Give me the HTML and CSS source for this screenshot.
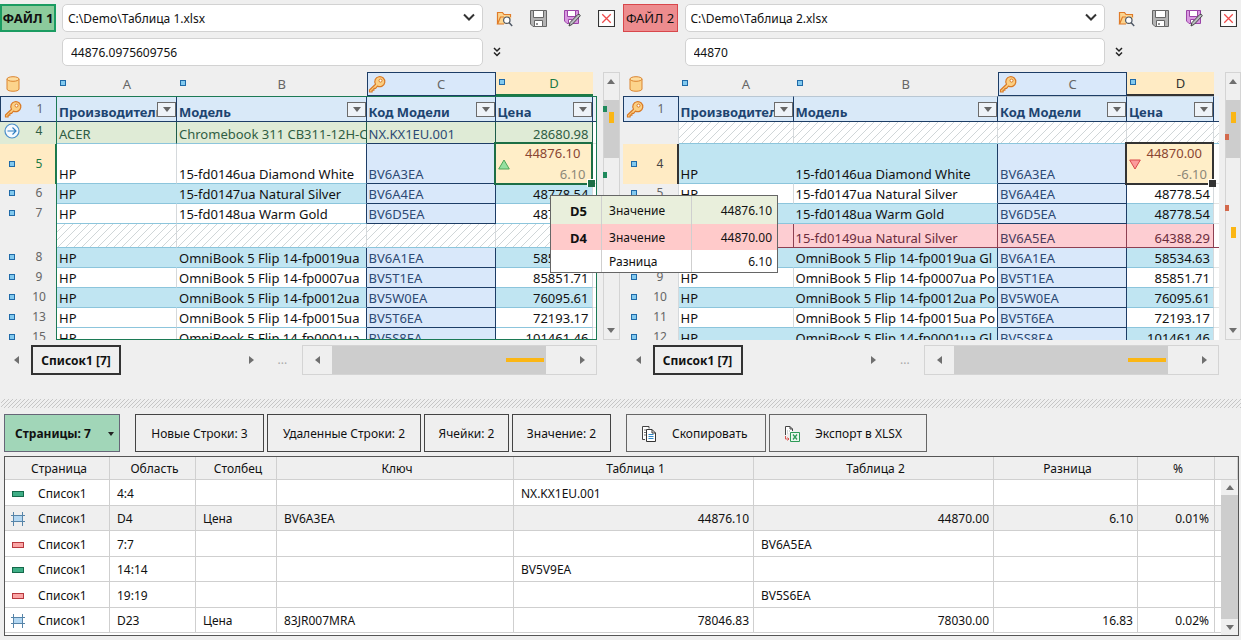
FILE: index.html
```html
<!DOCTYPE html>
<html lang="ru">
<head>
<meta charset="utf-8">
<title>Сравнение таблиц</title>
<link rel="stylesheet" href="styles.css">
</head>
<body>
<svg class="defs" aria-hidden="true">
  <symbol id="i-key" viewBox="0 0 18 18"><path d="M7.5 9.2 1.5 15v2h2.6v-1.8h1.8v-1.8h1.7l1.9-2.3a5 5 0 1 0-2-1.9z" fill="#fbcf83" stroke="#d97a26" stroke-width="1.2" stroke-linejoin="round"/><circle cx="12.5" cy="5.6" r="1.5" fill="#fff" stroke="#d97a26"/></symbol>
  <symbol id="i-db" viewBox="0 0 14 16"><path d="M1 3v10c0 3 12 3 12 0V3" fill="#fcd48c" stroke="#db842f"/><ellipse cx="7" cy="3" rx="6" ry="2.3" fill="#fddda0" stroke="#db842f"/></symbol>
  <symbol id="i-open" viewBox="0 0 17 17"><path d="M1.500 14V2.500h5l1.500 2h6.500V8" fill="#fbd490" stroke="#e07b28" stroke-width="1.2"/><path d="M1.500 14 4.500 7H15l-2 7z" fill="#fbd490"/><path d="M8 14H1.500l3-7H8" fill="none" stroke="#e07b28" stroke-width="1.2"/><circle cx="10.8" cy="10.2" r="3.2" fill="#fff" stroke="#4b5563" stroke-width="1.2"/><path d="m13 12.6 3.2 3.4" stroke="#4b5563" stroke-width="1.4"/></symbol>
  <symbol id="i-save" viewBox="0 0 17 17"><path d="M.5.5h16v16H3l-2.500-2.500z" fill="#b4b4b4" stroke="#666"/><path d="M3.500.5h10v7h-10z" fill="#fff" stroke="#666"/><path d="M4.500 10.500h8v6h-8z" fill="#fff" stroke="#666"/><path d="M7 13v2" stroke="#666" stroke-width="1.4"/></symbol>
  <symbol id="i-saveas" viewBox="0 0 17 17"><path d="M.5.500h14v13H3l-2.500-2.500z" fill="#d99ae0" stroke="#9b44a8"/><path d="M3.500.500h8v6h-8z" fill="#fff" stroke="#9b44a8"/><path d="M4.500 9.500H8v4H4.500z" fill="#fff" stroke="#9b44a8"/><path d="m5 16 1-3.500 8-8.200q1.800-.5 2.300 1.500l-8 8.500z" fill="#b9bcc0" stroke="#444"/></symbol>
  <symbol id="i-close" viewBox="0 0 16 16"><path d="M.5.5h15v15H.5z" fill="#fff" stroke="#333"/><path d="m4 4 8 8M12 4l-8 8" stroke="#f04b4b" stroke-width="1.200"/></symbol>
  <symbol id="i-more" viewBox="0 0 8 10"><path d="m1 1 3 3 3-3M1 5.500l3 3 3-3" fill="none" stroke="#222" stroke-width="1.500"/></symbol>
  <symbol id="i-chev" viewBox="0 0 12 8"><path d="m1 1.500 5 5 5-5" fill="none" stroke="#333" stroke-width="2"/></symbol>
  <symbol id="i-go" viewBox="0 0 16 16"><circle cx="8" cy="8" r="7" fill="#f5faff" stroke="#4b8fc9" stroke-width="1.200"/><path d="M3.500 8h8.500M8.500 4.500 12 8l-3.500 3.500" fill="none" stroke="#2f7fc2" stroke-width="1.200"/></symbol>
  <symbol id="i-grid" viewBox="0 0 14 14"><path d="M2.500 3.500h9v6h-9z" fill="#b3d7f2"/><path d="M2.500 0v14M11.500 0v14M0 3.500h14M0 9.500h14" stroke="#5684a8"/></symbol>
  <symbol id="i-copy" viewBox="0 0 16 16"><path d="M4 13.500H1.500v-13H8v2" fill="#fff" stroke="#444"/><path d="M3 4h2M3 6.500h2M3 9h2" stroke="#777"/><path d="M5.500 3.500H11L14.500 7v8.500h-9z" fill="#fff" stroke="#333"/><path d="M11 3.500V7h3.500" fill="none" stroke="#333"/><path d="M7.500 8.500h5M7.500 10.500h5M7.500 12.500h5" stroke="#2f86c7"/></symbol>
  <symbol id="i-xls" viewBox="0 0 16 16"><path d="M1.500 9V.5H6L8.500 3v2M6 .5V3h2.500" fill="#fff" stroke="#444"/><path d="M3 5h4M3 7h2" stroke="#9aa" stroke-dasharray="1 1"/><path d="M6.500 6.500h9v9h-9z" fill="#eaf6ee" stroke="#2e9a57"/><path d="m9 8.500 4 5M13 8.500l-4 5" stroke="#2e9a57" stroke-width="1.300"/><path d="M1.500 10v3H5M3.500 11.500 5 13l-1.500 1.500" fill="none" stroke="#d9534f"/></symbol>
  <symbol id="i-up" viewBox="0 0 12 11"><path d="M6 1 11.300 10H.7z" fill="#96e0a0" stroke="#4fa558"/></symbol>
  <symbol id="i-down" viewBox="0 0 12 11"><path d="M6 10 11.300 1H.7z" fill="#fb9b9b" stroke="#d94848"/></symbol>
</svg>

<main class="app">
<div class="panes">
  <section class="pane">
    <div class="filebar">
      <label class="tag tag-a" for="path1">ФАЙЛ 1</label>
      <div class="path"><select id="path1"><option>C:\Demo\Таблица 1.xlsx</option></select><svg><use href="#i-chev"/></svg></div>
      <div class="actions">
        <button aria-label="Открыть"><svg><use href="#i-open"/></svg></button>
        <button aria-label="Сохранить"><svg><use href="#i-save"/></svg></button>
        <button aria-label="Сохранить как"><svg><use href="#i-saveas"/></svg></button>
        <button aria-label="Закрыть"><svg><use href="#i-close"/></svg></button>
      </div>
      <input class="value" aria-label="Значение ячейки файла 1" value="44876.0975609756">
      <button class="expand" aria-label="Развернуть"><svg><use href="#i-more"/></svg></button>
    </div>
    <div class="sheet">
      <div class="viewport">
        <table class="grid grid-a">
          <colgroup><col class="c-n"><col class="c-a"><col><col class="c-c"><col class="c-d"><col class="c-e"></colgroup>
          <tr class="letters"><th><svg class="db"><use href="#i-db"/></svg></th>
            <th><div><i class="sq"></i><span>A</span></div></th><th><div><i class="sq"></i><span>B</span></div></th>
            <th class="kcol"><div><svg class="key"><use href="#i-key"/></svg><span>C</span></div></th><th class="cur"><div><i class="sq"></i><span>D</span></div></th><td></td></tr>
          <tr class="titles"><th class="rh keyrow"><div><svg class="key"><use href="#i-key"/></svg><span>1</span></div></th>
            <th><div>Производитель<button aria-label="Фильтр"></button></div></th><th><div>Модель<button aria-label="Фильтр"></button></div></th><th><div>Код Модели<button aria-label="Фильтр"></button></div></th><th><div>Цена<button aria-label="Фильтр"></button></div></th><td></td></tr>
          <tr class="added"><th class="rh"><div><svg class="go"><use href="#i-go"/></svg><span>4</span></div></th><td>ACER</td><td>Chromebook 311 CB311-12H-C</td><td>NX.KX1EU.001</td><td>28680.98</td><td></td></tr>
          <tr class="big"><th class="rh cur"><div><i class="sq"></i><span>5</span></div></th><td>HP</td><td>15-fd0146ua Diamond White</td><td>BV6A3EA</td><td class="sel"><div><svg><use href="#i-up"/></svg><b>44876.10</b><em>6.10</em></div></td><td></td></tr>
          <tr class="alt"><th class="rh"><div><i class="sq"></i><span>6</span></div></th><td>HP</td><td>15-fd0147ua Natural Silver</td><td>BV6A4EA</td><td>48778.54</td><td></td></tr>
          <tr><th class="rh"><div><i class="sq"></i><span>7</span></div></th><td>HP</td><td>15-fd0148ua Warm Gold</td><td>BV6D5EA</td><td>48778.54</td><td></td></tr>
          <tr class="gap tall"><th class="rh"></th><td></td><td></td><td></td><td></td><td></td></tr>
          <tr class="alt"><th class="rh"><div><i class="sq"></i><span>8</span></div></th><td>HP</td><td>OmniBook 5 Flip 14-fp0019ua</td><td>BV6A1EA</td><td>58534.63</td><td></td></tr>
          <tr><th class="rh"><div><i class="sq"></i><span>9</span></div></th><td>HP</td><td>OmniBook 5 Flip 14-fp0007ua</td><td>BV5T1EA</td><td>85851.71</td><td></td></tr>
          <tr class="alt"><th class="rh"><div><i class="sq"></i><span>10</span></div></th><td>HP</td><td>OmniBook 5 Flip 14-fp0012ua</td><td>BV5W0EA</td><td>76095.61</td><td></td></tr>
          <tr><th class="rh"><div><i class="sq"></i><span>13</span></div></th><td>HP</td><td>OmniBook 5 Flip 14-fp0015ua</td><td>BV5T6EA</td><td>72193.17</td><td></td></tr>
          <tr><th class="rh"><div><i class="sq"></i><span>15</span></div></th><td>HP</td><td>OmniBook 5 Flip 14-fp0001ua</td><td>BV5S8EA</td><td>101461.46</td><td></td></tr>
        </table>
        <div class="frame"></div>
      </div>
      <div class="vbar"><i class="tri up"></i><div class="thumb"></div><i class="tri down"></i>
        <i class="mark green m1"></i><i class="mark yellow m2"></i><i class="mark green m4"></i></div>
    </div>
    <div class="tabs">
      <i class="tri left"></i><button class="tab">Список1 [7]</button><i class="tri right"></i><span class="dots">...</span>
      <div class="hbar"><i class="tri left"></i><div class="thumb"></div><i class="tri right"></i></div>
    </div>
    <table class="tip">
      <tr class="tip-a"><th>D5</th><td>Значение</td><td>44876.10</td></tr>
      <tr class="tip-b"><th>D4</th><td>Значение</td><td>44870.00</td></tr>
      <tr><th></th><td>Разница</td><td>6.10</td></tr>
    </table>
  </section>

  <section class="pane pane-b">
    <div class="filebar">
      <label class="tag tag-b" for="path2">ФАЙЛ 2</label>
      <div class="path"><select id="path2"><option>C:\Demo\Таблица 2.xlsx</option></select><svg><use href="#i-chev"/></svg></div>
      <div class="actions">
        <button aria-label="Открыть"><svg><use href="#i-open"/></svg></button>
        <button aria-label="Сохранить"><svg><use href="#i-save"/></svg></button>
        <button aria-label="Сохранить как"><svg><use href="#i-saveas"/></svg></button>
        <button aria-label="Закрыть"><svg><use href="#i-close"/></svg></button>
      </div>
      <input class="value" aria-label="Значение ячейки файла 2" value="44870">
      <button class="expand" aria-label="Развернуть"><svg><use href="#i-more"/></svg></button>
    </div>
    <div class="sheet">
      <div class="viewport">
        <table class="grid grid-b">
          <colgroup><col class="c-n"><col class="c-a"><col><col class="c-c"><col class="c-d"><col class="c-e"></colgroup>
          <tr class="letters"><th><svg class="db"><use href="#i-db"/></svg></th>
            <th><div><i class="sq"></i><span>A</span></div></th><th><div><i class="sq"></i><span>B</span></div></th>
            <th class="kcol"><div><svg class="key"><use href="#i-key"/></svg><span>C</span></div></th><th class="cur"><div><i class="sq"></i><span>D</span></div></th><td></td></tr>
          <tr class="titles"><th class="rh keyrow"><div><svg class="key"><use href="#i-key"/></svg><span>1</span></div></th>
            <th><div>Производитель<button aria-label="Фильтр"></button></div></th><th><div>Модель<button aria-label="Фильтр"></button></div></th><th><div>Код Модели<button aria-label="Фильтр"></button></div></th><th><div>Цена<button aria-label="Фильтр"></button></div></th><td></td></tr>
          <tr class="gap"><th class="rh"></th><td></td><td></td><td></td><td></td><td></td></tr>
          <tr class="alt big"><th class="rh cur"><div><i class="sq"></i><span>4</span></div></th><td>HP</td><td>15-fd0146ua Diamond White</td><td>BV6A3EA</td><td class="sel"><div><svg><use href="#i-down"/></svg><b>44870.00</b><em>-6.10</em></div></td><td></td></tr>
          <tr><th class="rh"><div><i class="sq"></i><span>5</span></div></th><td>HP</td><td>15-fd0147ua Natural Silver</td><td>BV6A4EA</td><td>48778.54</td><td></td></tr>
          <tr class="alt"><th class="rh"><div><i class="sq"></i><span>6</span></div></th><td>HP</td><td>15-fd0148ua Warm Gold</td><td>BV6D5EA</td><td>48778.54</td><td></td></tr>
          <tr class="removed tall"><th class="rh"><div><i class="sq"></i><span>7</span></div></th><td>HP</td><td>15-fd0149ua Natural Silver</td><td>BV6A5EA</td><td>64388.29</td><td></td></tr>
          <tr class="alt"><th class="rh"><div><i class="sq"></i><span>8</span></div></th><td>HP</td><td>OmniBook 5 Flip 14-fp0019ua Gl</td><td>BV6A1EA</td><td>58534.63</td><td></td></tr>
          <tr><th class="rh"><div><i class="sq"></i><span>9</span></div></th><td>HP</td><td>OmniBook 5 Flip 14-fp0007ua Po</td><td>BV5T1EA</td><td>85851.71</td><td></td></tr>
          <tr class="alt"><th class="rh"><div><i class="sq"></i><span>10</span></div></th><td>HP</td><td>OmniBook 5 Flip 14-fp0012ua Po</td><td>BV5W0EA</td><td>76095.61</td><td></td></tr>
          <tr><th class="rh"><div><i class="sq"></i><span>11</span></div></th><td>HP</td><td>OmniBook 5 Flip 14-fp0015ua Po</td><td>BV5T6EA</td><td>72193.17</td><td></td></tr>
          <tr class="alt"><th class="rh"><div><i class="sq"></i><span>12</span></div></th><td>HP</td><td>OmniBook 5 Flip 14-fp0001ua Gl</td><td>BV5S8EA</td><td>101461.46</td><td></td></tr>
        </table>
      </div>
      <div class="vbar"><i class="tri up"></i><div class="thumb"></div><i class="tri down"></i>
        <i class="mark yellow m2"></i><i class="mark red m3"></i><i class="mark red m5"></i><i class="mark yellow m6"></i></div>
    </div>
    <div class="tabs">
      <i class="tri left"></i><button class="tab">Список1 [7]</button><i class="tri right"></i><span class="dots">...</span>
      <div class="hbar"><i class="tri left"></i><div class="thumb"></div><i class="tri right"></i></div>
    </div>
  </section>
</div>

<div class="splitter"></div>

<div class="toolbar">
  <button class="pages">Страницы: 7<i class="tri down dark"></i></button>
  <div class="group">
    <button class="w-new">Новые Строки: 3</button><button class="w-del">Удаленные Строки: 2</button><button class="w-cell">Ячейки: 2</button><button class="w-val">Значение: 2</button>
  </div>
  <div class="group tools">
    <button class="w-copy"><svg><use href="#i-copy"/></svg>Скопировать</button><button class="w-xls"><svg><use href="#i-xls"/></svg>Экспорт в XLSX</button>
  </div>
</div>

<div class="results">
  <table>
    <colgroup><col class="r-page"><col class="r-area"><col class="r-col"><col class="r-key"><col><col><col class="r-diff"><col class="r-pct"><col class="r-end"></colgroup>
    <thead><tr><th>Страница</th><th>Область</th><th>Столбец</th><th>Ключ</th><th>Таблица 1</th><th>Таблица 2</th><th>Разница</th><th>%</th><th></th></tr></thead>
    <tbody>
    <tr><td><div><i class="bar g"></i>Список1</div></td><td>4:4</td><td></td><td></td><td>NX.KX1EU.001</td><td></td><td></td><td></td><td></td></tr>
    <tr class="on"><td><div><svg><use href="#i-grid"/></svg>Список1</div></td><td>D4</td><td>Цена</td><td>BV6A3EA</td><td class="num">44876.10</td><td class="num">44870.00</td><td class="num">6.10</td><td class="num">0.01%</td><td></td></tr>
    <tr><td><div><i class="bar r"></i>Список1</div></td><td>7:7</td><td></td><td></td><td></td><td>BV6A5EA</td><td></td><td></td><td></td></tr>
    <tr><td><div><i class="bar g"></i>Список1</div></td><td>14:14</td><td></td><td></td><td>BV5V9EA</td><td></td><td></td><td></td><td></td></tr>
    <tr><td><div><i class="bar r"></i>Список1</div></td><td>19:19</td><td></td><td></td><td></td><td>BV5S6EA</td><td></td><td></td><td></td></tr>
    <tr><td><div><svg><use href="#i-grid"/></svg>Список1</div></td><td>D23</td><td>Цена</td><td>83JR007MRA</td><td class="num">78046.83</td><td class="num">78030.00</td><td class="num">16.83</td><td class="num">0.02%</td><td></td></tr>
    </tbody>
  </table>
  <div class="rbar"><i class="tri up"></i><div class="thumb"></div><i class="tri down"></i></div>
</div>
</main>
</body>
</html>
```
FILE: styles.css
```css
* { box-sizing: border-box; }
body { margin: 0; background: #efefef; color: #111; font: 12px/18px "Noto Sans", "Open Sans", sans-serif; }
button, input, select { font: inherit; color: inherit; margin: 0; }
button { padding: 0; border: 0; background: none; }
.defs { position: absolute; width: 0; height: 0; }
.app { overflow: hidden; }

.panes { display: grid; grid-template-columns: 1fr 1fr; column-gap: 2px; }
.pane { position: relative; min-width: 0; }
.pane-b { padding-left: 1px; }

/* file selector and value line */
.filebar { display: grid; grid-template-columns: 56px 1fr auto; column-gap: 6px; row-gap: 6px; padding: 4px 5px 6px 0; align-items: center; }
.pane-b .filebar { padding-right: 4px; }
.tag { height: 28px; line-height: 24px; border: 2px solid #1b9c62; background: #8ccb9c; text-align: center; font-size: 13px; white-space: nowrap; }
.tag-a { font-weight: 700; }
.tag-b { border: 1px solid #d8474b; background: #ed8c8e; line-height: 26px; margin-right: 1px; }
.path { position: relative; }
.path select, .value { width: 100%; height: 28px; border: 1px solid #d2d2d2; border-radius: 5px; background: #fff; appearance: none; display: block; outline: 0; }
.path select { padding: 1px 30px 0 5px; }
.path svg { position: absolute; right: 8px; top: 9px; width: 12px; height: 8px; pointer-events: none; }
.value { grid-column: 2; padding: 0 8px; }
.actions { display: flex; gap: 17px; padding-left: 7px; }
.actions button, .actions svg { width: 17px; height: 17px; display: block; }
.expand { justify-self: start; margin-left: 4px; width: 8px; height: 10px; }
.expand svg { width: 8px; height: 10px; display: block; }

/* sheets */
.sheet { display: flex; gap: 6px; height: 268px; }
.viewport { position: relative; flex: 1; min-width: 0; overflow: hidden; }
.grid { width: 100%; table-layout: fixed; border-collapse: separate; border-spacing: 0; font-size: 13px; line-height: 18px; }
.grid-a .c-n { width: 57px; } .grid-a .c-a { width: 120px; } .grid-a .c-d { width: 97px; } .grid-a .c-e { width: 4px; }
.grid-b .c-n { width: 56px; } .grid-b .c-a { width: 115px; } .grid-b .c-d { width: 87px; } .grid-b .c-e { width: 5px; }
.c-c { width: 129px; }
.grid tr { height: 20px; background: #fff; }
.grid td { height: 20px; padding: 0 4px 0 2px; vertical-align: bottom; white-space: nowrap; overflow: hidden; border: solid #d5d9dc; border-width: 0 1px 1px 0; border-bottom-color: #8cc5dc; }
.grid td:nth-child(5) { text-align: right; padding-right: 3px; }
.grid td:nth-child(6) { padding: 0; border-right: 0; background: #fff; border-bottom-color: #e2e2e2; }
.grid td:nth-child(3) { border-right-color: #1d3d66; padding-right: 0; }
.grid td:nth-child(4) { background: #d9e8fa; color: #2d4a74; border-color: #1d3d66; }
.grid th { padding: 0; font-weight: 400; }
.grid tr.alt { background: #c0e5f2; }
.grid .alt td:nth-child(2) { border-right-color: #c0e5f2; }
.grid tr.big, .grid .big td { height: 40px; }
.grid tr.tall, .grid .tall td { height: 24px; }

.grid tr.letters { height: 24px; background: none; }
.letters th { height: 24px; color: #666; }
.letters div { display: flex; align-items: center; height: 23px; }
.letters span { flex: 1; text-align: center; }
.letters .sq { margin: 0 11px 2px 3px; }
.letters .key { width: 18px; height: 18px; margin-right: 2px; }
.grid .letters td { height: 24px; border: 0; background: none; }
.grid .kcol { background: #d9e8fa; border: 1px solid #1d3d66; }
.letters .kcol div { height: 22px; }
.grid .letters .cur { background: #ffebc4; color: #1c7a45; border-bottom: 2px solid #1c7a45; }
.grid-b .letters .cur { color: #333; border-bottom-color: #333; }
.letters .cur div { height: 22px; }
.db { display: block; width: 14px; height: 16px; margin-left: 6px; }

.grid tr.titles { height: 26px; background: #d9e9f8; }
.titles th { height: 26px; font-weight: 700; color: #1d4470; text-align: left; border: solid #1d3d66; border-width: 1px 1px 1px 0; border-top-color: #b9c7d3; }
.grid-a .titles th { border-top-color: #1c7a55; }
.titles div { position: relative; height: 24px; padding: 7px 0 0 2px; line-height: 17px; overflow: hidden; white-space: nowrap; }
.titles button { position: absolute; right: 0; top: 5px; width: 19px; height: 15px; border: 1px solid #6b6b6b; background: #eef3f8; }
.titles button::after { content: ""; position: absolute; left: 5px; top: 4px; border: solid transparent; border-width: 5px 4px 0; border-top-color: #666; }
.grid .titles td { height: 26px; background: #e8f0f8; border-color: #1d3d66; }

.grid .rh { background: #efefef; border-right: 1px solid #d5d9dc; color: #666; font-size: 12px; vertical-align: top; }
.rh div { display: grid; grid-template-columns: 24px 30px; align-items: center; justify-items: center; height: 18px; }
.grid-b .rh div { grid-template-columns: 22px 31px; }
.grid-a .rh { border-right-color: #1c7a55; }
.rh .go { width: 16px; height: 16px; }
.rh .key { width: 18px; height: 18px; }
.grid .rh.keyrow { background: #d9e8fa; border: 1px solid #1d3d66; font-weight: 400; color: #666; }
.titles .keyrow div { padding: 0; overflow: visible; height: 23px; }
.grid .rh.cur { background: #ffebc4; color: #1c7a45; border-right: 2px solid #1c7a45; vertical-align: middle; }
.grid-b .rh.cur { color: #444; border-right-color: #333; }
.sq { flex: none; display: block; width: 6px; height: 6px; border: 1px solid #1f6aa8; background: #82c9ee; }

.grid tr.added, .grid .added td, .grid .added .rh { height: 22px; background: #dfebd6; color: #2f5d43; }
.grid .added td { border-right-color: #1d5c4a; }
.grid .added td:nth-child(4) { color: #2d4a74; }
.grid .added td:last-child { background: #fff; }
.grid tr.removed, .grid .removed td { background: #fdcdd2; color: #6b2c3c; border-color: #8d4052; }
.grid .removed td:nth-child(4) { color: #4a3a5c; }
.grid .removed td:last-child { background: #fff; }
.grid tr.gap, .grid .gap td { height: 22px; background: #fff linear-gradient(135deg, transparent 46%, #d0d6d8 46% 54%, transparent 54%) 0 0 / 8px 8px; border-right-color: #d5d9dc; border-bottom-color: #8cc5dc; }
.grid tr.gap.tall, .grid .gap.tall td { height: 24px; }

.grid .sel { position: relative; overflow: visible; padding: 0; background: #ffeec8; }
.grid .big .sel { padding: 0; }
.sel div { position: relative; display: flex; flex-direction: column; justify-content: space-between; height: 38px; padding: 0 6px 1px 0; line-height: 16px; }
.sel b { font-weight: 400; color: #8a4632; margin-right: 5px; }
.sel em { font-style: normal; color: #8c8878; }
.sel svg { position: absolute; left: 2px; top: 14px; width: 12px; height: 11px; }
.sel::before { content: ""; position: absolute; inset: -2px -1px -2px -2px; border: 2px solid #1c6e45; z-index: 1; }
.sel::after { content: ""; position: absolute; right: -3px; bottom: -4px; width: 7px; height: 7px; border: solid #fff; border-width: 1px 0 0 1px; background: #1c6e45; z-index: 2; }
.grid-b .sel::before { border-color: #333; }
.grid-b .sel::after { background: #333; }
.frame { position: absolute; inset: 24px 0 0 56px; border: 1px solid #1c7a55; pointer-events: none; }

/* scroll bars */
.tri { display: block; flex: none; width: 0; height: 0; border: 0 solid transparent; }
.tri.up { border-width: 0 4px 5px; border-bottom-color: #6f6f6f; }
.tri.down { border-width: 5px 4px 0; border-top-color: #6f6f6f; }
.tri.left { border-width: 4px 5px 4px 0; border-right-color: #6f6f6f; }
.tri.right { border-width: 4px 0 4px 5px; border-left-color: #6f6f6f; }
.thumb { background: #cdcdcd; }
.vbar { position: relative; flex: none; width: 17px; border: 1px solid #d4d4d4; display: flex; flex-direction: column; align-items: center; padding: 6px 0; }
.pane-b .vbar { width: 16px; }
.vbar .thumb { width: 100%; height: 58px; margin-top: 16px; }
.vbar .down { margin-top: auto; }
.mark { position: absolute; left: -1px; width: 4px; height: 6px; }
.mark.yellow { left: 5px; width: 5px; height: 11px; background: #fbb614; }
.mark.green { background: #1f8a5c; }
.mark.red { background: #d3694c; }
.m1 { top: 33px; } .m2 { top: 39px; } .m3 { top: 61px; } .m4 { top: 99px; } .m5 { top: 132px; } .m6 { top: 154px; }

.tabs { display: flex; align-items: center; height: 30px; margin-top: 5px; padding: 0 23px 0 14px; }
.pane-b .tabs { padding: 0 22px 0 13px; }
.tab { width: 90px; height: 30px; margin-left: 12px; padding-top: 2px; border: 2px solid #333; font-weight: 700; white-space: nowrap; }
.tabs > .right { margin-left: auto; }
.dots { margin: 0 14px 0 24px; width: 10px; color: #aaa; }
.hbar { width: 295px; height: 30px; border: 1px solid #d4d4d4; display: flex; align-items: center; padding: 0 11px 0 12px; }
.hbar .thumb { flex: none; width: 214px; height: 28px; margin-left: 12px; padding: 12px 2px 0 174px; }
.hbar .thumb::after { content: ""; display: block; height: 4px; background: #fbb614; }
.hbar .right { margin-left: auto; }

/* difference card */
.tip { position: absolute; left: 550px; top: 195px; z-index: 5; width: 228px; border: 1px solid #666; background: #fff; border-collapse: separate; border-spacing: 0; table-layout: fixed; }
.tip th { width: 50px; text-align: right; padding: 2px 14px 0 0; font-size: 13px; }
.tip td { height: 26px; padding: 2px 7px 0; border-left: 1px solid #cfcfcf; }
.tip td:last-child { width: 86px; text-align: right; padding-right: 5px; }
.tip tr:last-child td { height: 22px; }
.tip .tip-a td { height: 28px; }
.tip-a { background: #e9efdc; }
.tip-b { background: #ffcaca; }

.splitter { height: 9px; margin: 24px 0 6px 1px; background: linear-gradient(135deg, #c6c6c6 12%, #efefef 12% 38%, #c6c6c6 38% 62%, #efefef 62% 88%, #c6c6c6 88%) 0 0 / 4px 4px; }

/* filters */
.toolbar { display: flex; gap: 15px; padding: 0 4px; }
.toolbar button { height: 38px; border: 1px solid #444; white-space: nowrap; padding: 1px 0 0; }
.toolbar .pages { display: flex; align-items: center; justify-content: space-between; width: 116px; padding: 1px 5px 0 10px; border-color: #667; background: #a1d6b8; font-weight: 700; }
.toolbar .w-new { width: 129px; }
.toolbar .w-del { width: 154px; }
.toolbar .w-cell { width: 85px; }
.toolbar .w-val { width: 99px; }
.toolbar .w-copy { width: 140px; }
.toolbar .w-xls { width: 158px; padding-left: 15px; }
.tri.dark { border-width: 4px 3px 0; border-top-color: #222; }
.group { display: flex; gap: 3px; }
.toolbar .tools button { display: flex; align-items: center; gap: 15px; border-color: #666; padding-left: 14px; }
.tools svg { width: 16px; height: 16px; }

/* results */
.results { position: relative; margin: 4px 2px 0 4px; border: 1px solid #555; background: #fff; height: 180px; overflow: hidden; }
.results table { width: 100%; table-layout: fixed; border-collapse: separate; border-spacing: 0; }
.r-page { width: 105px; } .r-area { width: 86px; } .r-col { width: 81px; } .r-key { width: 237px; } .r-diff { width: 144px; } .r-pct { width: 77px; } .r-end { width: 23px; }
.results th { height: 23px; padding: 1px 0 0 4px; font-weight: 400; background: #efefef; border: solid #d0d0d0; border-width: 0 1px 1px 0; }
.results td { height: 25px; padding: 2px 7px 0; white-space: nowrap; border: solid #cfcfcf; border-width: 0 1px 1px 0; }
.results tr:nth-child(odd) td { height: 26px; }
.results td.num { text-align: right; padding-right: 4px; }
.results .on td { background: #efefef; }
.results td div { display: grid; grid-template-columns: 14px 1fr; column-gap: 13px; align-items: center; }
.results td:first-child { padding-left: 6px; padding-right: 0; }
.results td svg { width: 14px; height: 14px; }
.results td.num:nth-child(8) { padding-right: 5px; }
.bar { width: 12px; height: 6px; margin-left: 1px; border: 1px solid #14694a; background: #3fae86; }
.bar.r { border-color: #b7383e; background: #fba5a5; }
.rbar { position: absolute; right: 0; top: 23px; bottom: 0; width: 17px; display: flex; flex-direction: column; align-items: center; background: #efefef; padding: 5px 0; }
.rbar .thumb { width: 100%; flex: 1; margin: 5px 0 6px; }
```
